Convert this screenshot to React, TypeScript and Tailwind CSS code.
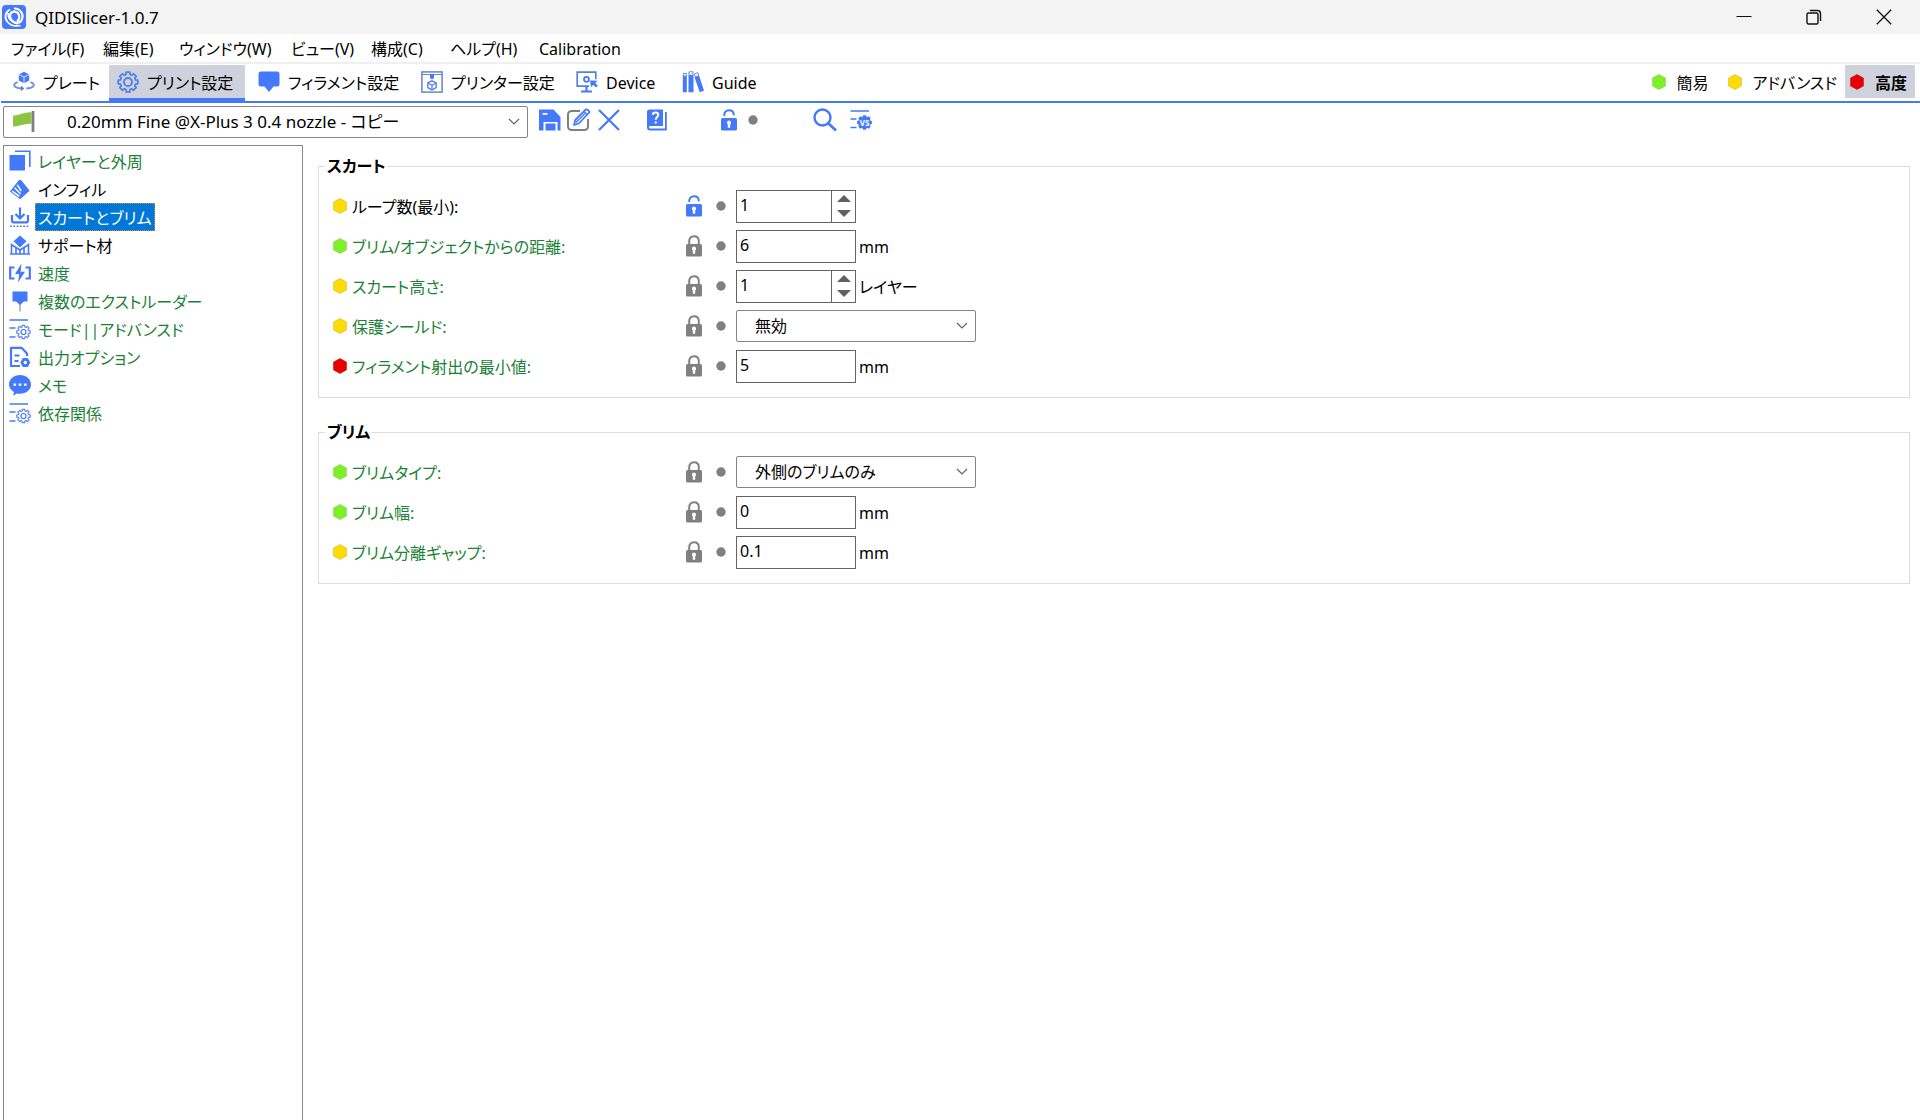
import React, { useState } from "react";

const BLUE = "#4479fb";
const GRAY = "#808080";

type Level = "simple" | "advanced" | "expert";
const levelColor: Record<Level, string> = {
  simple: "#7df028",
  advanced: "#ffdc00",
  expert: "#e70000",
};
const levelEdge: Record<Level, string> = {
  simple: "#8fd45c",
  advanced: "#e0c23c",
  expert: "#d22020",
};

function Svg({ children, w = 22, h = 22, vw = 22, vh = 22 }: { children: React.ReactNode; w?: number; h?: number; vw?: number; vh?: number }) {
  return (
    <svg width={w} height={h} viewBox={`0 0 ${vw} ${vh}`} fill="none" className="shrink-0" aria-hidden="true">
      {children}
    </svg>
  );
}

function Hex({ level }: { level: Level }) {
  return (
    <Svg w={14} h={16} vw={14} vh={16}>
      <path d="M7 .6 13.4 4v8L7 15.4.6 12V4z" fill={levelColor[level]} stroke={levelEdge[level]} strokeWidth=".8" />
    </Svg>
  );
}

function Dot() {
  return (
    <Svg w={10} h={10} vw={10} vh={10}>
      <circle cx="5" cy="5" r="4.7" fill={GRAY} />
    </Svg>
  );
}

function Lock({ open = false }: { open?: boolean }) {
  const c = open ? BLUE : GRAY;
  return (
    <Svg w={16} h={22} vw={16} vh={22}>
      <path d={open ? "M3.2 6.2C3.2 3 5.3 1.3 8 1.3s4.600 1.700 4.800 4.200" : "M3.200 10V6.200C3.200 3 5.300 1.300 8 1.300s4.800 1.700 4.800 4.900V10"} stroke={c} strokeWidth="2" strokeLinecap="round" />
      <rect x="0" y="9" width="16" height="12.500" rx="1.500" fill={c} />
      <path d="M8 11.600a2.100 2.100 0 0 1 1.200 3.800v3.300H6.800v-3.300A2.100 2.100 0 0 1 8 11.600z" fill="#fff" />
    </Svg>
  );
}

function gearPath(cx: number, cy: number, r: number, depth: number, teeth: number) {
  const pts: string[] = [];
  const step = (Math.PI * 2) / teeth;
  for (let i = 0; i < teeth; i++) {
    const a = i * step - Math.PI / 2;
    const spots: [number, number][] = [
      [r, -0.24],
      [r, 0.24],
      [r - depth, 0.34],
      [r - depth, 0.66],
    ];
    for (const [rad, f] of spots) {
      pts.push(`${(cx + rad * Math.cos(a + f * step)).toFixed(2)} ${(cy + rad * Math.sin(a + f * step)).toFixed(2)}`);
    }
  }
  return `M${pts.join("L")}z`;
}

function PlateIcon() {
  return (
    <Svg>
      <path d="M11 .8l5.200 2.600v6L11 12.200 5.800 9.400v-6z" fill={BLUE} />
      <path d="M6 3.600l5 2.500 5-2.500M11 6.100v6" stroke="#fff" strokeWidth=".8" />
      <path d="M4.500 11.200C-.2 13 .1 15.800 5.200 17l3.400.5M17.500 11.200c4.700 1.800 4.400 4.600-.7 5.800l-3.400.5" stroke="#6d8fd9" strokeWidth="1.800" />
      <path d="M8 14.600l3.400 2.900L8 20.200z" fill="#5c84e6" />
    </Svg>
  );
}

function GearIcon() {
  return (
    <Svg>
      <path d={gearPath(11, 11, 10, 2.3, 8)} stroke="#4d7de9" strokeWidth="1.700" strokeLinejoin="round" />
      <circle cx="11" cy="11" r="4" stroke="#4d7de9" strokeWidth="1.800" />
    </Svg>
  );
}

function FilamentIcon() {
  return (
    <Svg>
      <path d="M3 .5h16a2.500 2.500 0 0 1 2.500 2.500v10A2.500 2.500 0 0 1 19 15.500h-3.500L11 21l-4.500-5.500H3A2.500 2.500 0 0 1 .5 13V3A2.500 2.500 0 0 1 3 .5z" fill={BLUE} />
    </Svg>
  );
}

function PrinterIcon() {
  return (
    <Svg>
      <rect x=".9" y=".9" width="20.200" height="20.200" stroke="#6d8dcc" strokeWidth="1.600" />
      <path d="M1 3.500h20" stroke="#6d8dcc" strokeWidth="1.200" />
      <path d="M9 3h4v4l-2 1.500L9 7z" fill={BLUE} />
      <path d="M11 9.800l4.200 2.200v4.600L11 18.900l-4.200-2.300V12z" stroke="#4d7de9" strokeWidth="1.300" />
      <path d="M7 12.200l4 2.100 4-2.100M11 14.300v4.400" stroke="#4d7de9" strokeWidth="1.200" />
    </Svg>
  );
}

function DeviceIcon() {
  return (
    <Svg>
      <path d="M13 15.200H1.200V1.200h18.600v7" stroke="#5680dd" strokeWidth="1.700" />
      <path d="M5 20.500h11M10.500 15v5" stroke={BLUE} strokeWidth="2.200" />
      <circle cx="10.500" cy="8.300" r="2.500" stroke={BLUE} strokeWidth="1.800" />
      <path d="M14 9.500l7.500.3-2.300 2.200 2.600 2.800-1.800 1.800-2.700-2.800-2.300 2.500z" fill={BLUE} />
    </Svg>
  );
}

function GuideIcon() {
  return (
    <Svg>
      <path d="M.8 5h4v16.200h-4zM6.500 4h5v17.200h-5zM12.500 6.200l4.500-1.600 5 15-4.200 1.600z" fill={BLUE} />
      <path d="M1.300 2.500h3V5h-3zM7 .8h4v3.400H7zM12.300 3l3.600-1.400.9 3-3.500 1.300z" stroke="#6d8dcc" strokeWidth="1" />
    </Svg>
  );
}

function LayersIcon() {
  return (
    <Svg>
      <rect x=".5" y="5" width="15.500" height="15.500" fill={BLUE} />
      <path d="M6 1.300h14.800V17" stroke={BLUE} strokeWidth="1.600" />
    </Svg>
  );
}

function InfillIcon() {
  return (
    <Svg>
      <path d="M9.800 2.300a1.800 1.800 0 0 1 2.500 0l8.300 10.500-8.300 7.400a2 2 0 0 1-2.500 0L1 13.600z" fill={BLUE} />
      <path d="M8.200 6.800l4 6.200M5.600 9.800l6 6.200M3.300 13.200l7 5.200" stroke="#fff" strokeWidth="1.500" />
    </Svg>
  );
}

function SkirtIcon() {
  return (
    <Svg>
      <path d="M11 1.500V12M6.500 8l4.500 4.500L15.500 8" stroke={BLUE} strokeWidth="2.200" />
      <path d="M3 9v5.500a1.800 1.800 0 0 0 1.800 1.800h12.400a1.800 1.800 0 0 0 1.800-1.800V9" stroke={BLUE} strokeWidth="2.200" />
      <path d="M1 20.300h20" stroke={BLUE} strokeWidth="1.600" strokeDasharray="1.800 1.500" />
    </Svg>
  );
}

function SupportIcon() {
  return (
    <Svg>
      <path d="M11 1.500l6.500 5.800L11 13.500 4.500 7.300z" fill={BLUE} />
      <path d="M2.500 9.500v10M7 14v5.500M11 16v3.500M15 14v5.500M19.500 9.500v10M1 20h20" stroke={BLUE} strokeWidth="1.600" />
      <path d="M3 11l8 5 8-5" stroke={BLUE} strokeWidth="1.600" />
    </Svg>
  );
}

function SpeedIcon() {
  return (
    <Svg>
      <path d="M5.500 5.500H1.200v11h4.300M16.500 5.500h4.300v11h-4.300" stroke={BLUE} strokeWidth="2.200" />
      <path d="M12.500 1.500L6 12h4.200L9 20.500 16 9.800h-4.300z" fill={BLUE} />
    </Svg>
  );
}

function ExtruderIcon() {
  return (
    <Svg>
      <path d="M11 12v9.500" stroke="#bbb" strokeWidth="2" />
      <path d="M3.500 1.500h15v10H15L11 15l-4-3.500H3.500z" fill={BLUE} />
    </Svg>
  );
}

function AdvancedIcon() {
  return (
    <Svg>
      <path d="M.5 2h18.500M.5 10h6M.5 19h6" stroke={BLUE} strokeWidth="1.500" />
      <path d={gearPath(14.5, 14, 6.8, 1.6, 8)} stroke="#5b87f0" strokeWidth="1.200" strokeLinejoin="round" />
      <circle cx="14.500" cy="14" r="2.500" stroke={BLUE} strokeWidth="1.200" />
    </Svg>
  );
}

function OutputIcon() {
  return (
    <Svg>
      <path d="M11 20H2V1.800h10.500L18 7.500V10" stroke={BLUE} strokeWidth="2.200" strokeLinejoin="round" />
      <path d="M5.500 9.500h5M5.500 15h4" stroke={BLUE} strokeWidth="2" />
      <path d="M13.800 12h5l2.500 4.500-2.500 4.500h-5l-2.500-4.500z" fill={BLUE} />
      <circle cx="16.300" cy="16.500" r="1.700" fill="#fff" />
    </Svg>
  );
}

function NotesIcon() {
  return (
    <Svg>
      <path d="M11 1c6 0 11 4.100 11 9.500S17 19.800 11 19.800c-1.200 0-2-.1-3-.4L4.200 21.800 5 18C2 16.300 0 13.700 0 10.500 0 5.100 5 1 11 1z" fill={BLUE} />
      <path d="M4.500 9.500h2.600v2.300H4.500zM9.700 9.500h2.600v2.300H9.700zM14.900 9.500h2.600v2.300h-2.600z" fill="#fff" />
    </Svg>
  );
}

function Chevron() {
  return (
    <svg width="12" height="8" viewBox="0 0 12 8" fill="none" className="pointer-events-none absolute right-2 top-1/2 -translate-y-1/2" aria-hidden="true">
      <path d="M1 1l5 5 5-5" stroke="#606060" strokeWidth="1.200" />
    </svg>
  );
}

function AppLogo() {
  return (
    <Svg w={24} h={24} vw={24} vh={24}>
      <rect width="24" height="24" rx="4" fill={BLUE} />
      <path d="M12 3.500a8 8 0 0 1 7.500 11.800c-.9 1.800-2.600 2.700-4.500 2.700-4-.5-7-3.500-7-7a4.500 4.500 0 0 1 8.500-2c1.600 3 .5 6-1.500 7.500" stroke="#fff" strokeWidth="2.200" />
      <path d="M8 4.500C3 7 2 13 5.500 17c3 3.500 8 4.500 13 3.500" stroke="#fff" strokeWidth="1.700" />
      <path d="M6.200 8c-.8 5 3 9.500 9.800 11" stroke="#fff" strokeWidth="1.500" />
    </Svg>
  );
}

function TitleBar() {
  return (
    <header className="flex h-[34px] items-center bg-[#f3f3f3] pl-0.5 pr-px">
      <AppLogo />
      <h1 className="ml-[9px] flex-1 pt-0.5">QIDISlicer-1.0.7</h1>
      <button aria-label="最小化" className="flex h-full w-[70px] items-center justify-center">
        <Svg w={16} h={16} vw={16} vh={16}><path d="M.5 7.500h15" stroke="#111" strokeWidth="1" /></Svg>
      </button>
      <button aria-label="元に戻す" className="flex h-full w-[70px] items-center justify-center">
        <Svg w={16} h={16} vw={16} vh={16}>
          <rect x="1" y="4" width="11" height="11" rx="1.500" stroke="#111" strokeWidth="1.400" />
          <path d="M4 1.500h7.500a3 3 0 0 1 3 3V12" stroke="#111" strokeWidth="1.400" />
        </Svg>
      </button>
      <button aria-label="閉じる" className="flex h-full w-[70px] items-center justify-center">
        <Svg w={16} h={16} vw={16} vh={16}><path d="M.8.8l14.400 14.400M15.200.8L.8 15.200" stroke="#111" strokeWidth="1.300" /></Svg>
      </button>
    </header>
  );
}

const menus = [
  { label: "ファイル(F)", width: "w-[92px]" },
  { label: "編集(E)", width: "w-[76px]" },
  { label: "ウィンドウ(W)", width: "w-[112px]" },
  { label: "ビュー(V)", width: "w-20" },
  { label: "構成(C)", width: "w-[79px]" },
  { label: "ヘルプ(H)", width: "w-[89px]" },
  { label: "Calibration", width: "w-24" },
];

const tabs = [
  { label: "プレート", icon: <PlateIcon />, width: "w-[104px]" },
  { label: "プリント設定", icon: <GearIcon />, width: "w-[136px]" },
  { label: "フィラメント設定", icon: <FilamentIcon />, width: "w-[163px] ml-[5px]" },
  { label: "プリンター設定", icon: <PrinterIcon />, width: "w-[155px]" },
  { label: "Device", icon: <DeviceIcon />, width: "w-[106px]" },
  { label: "Guide", icon: <GuideIcon />, width: "w-[100px]" },
];

const modes: { label: string; level: Level }[] = [
  { label: "簡易", level: "simple" },
  { label: "アドバンスド", level: "advanced" },
  { label: "高度", level: "expert" },
];

function TabBar() {
  const [active, setActive] = useState(1);
  const [mode, setMode] = useState(2);
  return (
    <nav className="ml-px flex h-[39px] items-start border-b-2 border-[#4479fb] pl-1 pr-[5px] pt-px text-base">
      {tabs.map((t, i) => (
        <button
          key={t.label}
          onClick={() => setActive(i)}
          className={`flex h-9 shrink-0 items-center gap-2 whitespace-nowrap border-b-[3px] pl-2 ${t.width} ${i === active ? "border-[#4479fb] bg-[#cfd2dc]" : "border-transparent"}`}
        >
          {t.icon}
          <span className="pt-0.5">{t.label}</span>
        </button>
      ))}
      <div className="ml-auto flex">
        {modes.map((m, i) => (
          <button
            key={m.label}
            onClick={() => setMode(i)}
            className={`flex h-[33px] items-center gap-[11px] whitespace-nowrap pl-[5px] pr-2 ${i === 1 ? "ml-1.5" : ""} ${i === mode ? "bg-[#cfd2dc] font-bold" : ""}`}
          >
            <Hex level={m.level} />
            <span className="pt-0.5">{m.label}</span>
          </button>
        ))}
      </div>
    </nav>
  );
}

function Toolbar() {
  return (
    <div className="flex h-[42px] items-start pl-[3px] pt-[3px]">
      <div className="relative h-8 w-[525px]">
        <select aria-label="プリントプリセット" className="h-full w-full appearance-none rounded-xs border border-[#858585] bg-white pl-[63px]">
          <option>0.20mm Fine @X-Plus 3 0.4 nozzle - コピー</option>
        </select>
        <div className="pointer-events-none absolute left-2.5 top-[5px]">
          <Svg>
            <path d="M0 4.500C6 5 12 .5 18.500 1.500v11.500C12 12 6 16 0 15.500z" fill="#8cc63f" />
            <path d="M20 0v21" stroke="#808080" strokeWidth="2.800" />
          </Svg>
        </div>
        <Chevron />
      </div>
      <div className="flex h-7 items-center">
        <button aria-label="保存" className="ml-[11px]">
          <Svg><path d="M0 .5h14.500L21.500 8v13.500h-3V13H4.500v8.500H0zM3.500 4v1.800h5V4zM6.500 14.500h10v7h-10z" fill={BLUE} fillRule="evenodd" /></Svg>
        </button>
        <button aria-label="名前の変更" className="ml-1.5">
          <Svg w={24} h={24} vw={24} vh={24}>
            <path d="M13 3H4.500A3.500 3.500 0 0 0 1 6.500v12A3.500 3.500 0 0 0 4.500 22h13a3.500 3.500 0 0 0 3.500-3.500V11" stroke={GRAY} strokeWidth="2" />
            <path d="M7 17l1.300-5L18.800 1.500c1-.8 4.300 1.700 3.400 3L11.800 15.500z" stroke={BLUE} strokeWidth="1.800" strokeLinejoin="round" />
            <path d="M17 3.500l3.500 3.300M9 14.500L18 5.500" stroke={BLUE} strokeWidth="1.200" />
          </Svg>
        </button>
        <button aria-label="削除" className="ml-[7px]">
          <Svg><path d="M1 1l20 20M21 1L1 21" stroke={BLUE} strokeWidth="2.200" /></Svg>
        </button>
        <button aria-label="ヘルプ" className="ml-[27px]">
          <Svg w={20} vw={20}>
            <path d="M2.500.5H16V17H3.200a1.200 1.200 0 0 0 0 2.500H18V3h1.800v18.500H3a3 3 0 0 1-3-3V3A2.500 2.500 0 0 1 2.500.5z" fill={BLUE} />
            <path d="M5.800 6c0-3.200 5.400-3.200 5.400 0 0 2-2.500 2-2.500 4.800M8.700 12.500v2" stroke="#fff" strokeWidth="2" />
          </Svg>
        </button>
        <button aria-label="システム値に戻す" className="ml-[54px]"><Lock open /></button>
        <button aria-label="変更を元に戻す" className="ml-[11px]"><Dot /></button>
        <button aria-label="検索" className="ml-[55px]">
          <Svg w={24} h={24} vw={24} vh={24}>
            <circle cx="9.500" cy="9.500" r="8" stroke={BLUE} strokeWidth="2.400" />
            <path d="M15.500 15.500l7.500 7" stroke={BLUE} strokeWidth="2.800" />
          </Svg>
        </button>
        <button aria-label="プリセットの比較" className="ml-[13px]">
          <Svg>
            <path d="M.5 2h18.500M.5 10h6M.5 18.500h6" stroke={BLUE} strokeWidth="1.500" />
            <path d={gearPath(14.5, 13.5, 7.5, 1.2, 8)} fill={BLUE} />
            <text x="14.500" y="16.500" textAnchor="middle" fill="#fff" className="text-[8px] font-bold">VS</text>
          </Svg>
        </button>
      </div>
    </div>
  );
}

const pages = [
  { label: "レイヤーと外周", icon: <LayersIcon />, system: true },
  { label: "インフィル", icon: <InfillIcon />, system: false },
  { label: "スカートとブリム", icon: <SkirtIcon />, system: false },
  { label: "サポート材", icon: <SupportIcon />, system: false },
  { label: "速度", icon: <SpeedIcon />, system: true },
  { label: "複数のエクストルーダー", icon: <ExtruderIcon />, system: true },
  { label: "モード||アドバンスド", icon: <AdvancedIcon />, system: true },
  { label: "出力オプション", icon: <OutputIcon />, system: true },
  { label: "メモ", icon: <NotesIcon />, system: true },
  { label: "依存関係", icon: <AdvancedIcon />, system: true },
];

function Sidebar() {
  const [selected, setSelected] = useState(2);
  return (
    <aside className="w-[300px] shrink-0 border border-b-0 border-[#828790] pl-[5px] text-base">
      <ul className="pt-px">
        {pages.map((p, i) => (
          <li key={p.label}>
            <button onClick={() => setSelected(i)} className="flex h-7 items-center gap-1">
              {p.icon}
              <span
                className={`flex h-7 items-center whitespace-nowrap border px-0.5 pt-0.5 ${
                  i === selected
                    ? "border-dotted border-[#d98a3a] bg-[#0078d7] text-white"
                    : p.system
                      ? "border-transparent text-[#1b8136]"
                      : "border-transparent text-black"
                }`}
              >
                {p.label}
              </span>
            </button>
          </li>
        ))}
      </ul>
    </aside>
  );
}

interface Field {
  id: string;
  label: string;
  level: Level;
  kind: "spin" | "text" | "select";
  value: string;
  unit?: string;
  changed?: boolean;
}

const skirt: Field[] = [
  { id: "skirts", label: "ループ数(最小):", level: "advanced", kind: "spin", value: "1", changed: true },
  { id: "skirt_distance", label: "ブリム/オブジェクトからの距離:", level: "simple", kind: "text", value: "6", unit: "mm" },
  { id: "skirt_height", label: "スカート高さ:", level: "advanced", kind: "spin", value: "1", unit: "レイヤー" },
  { id: "draft_shield", label: "保護シールド:", level: "advanced", kind: "select", value: "無効" },
  { id: "min_skirt_length", label: "フィラメント射出の最小値:", level: "expert", kind: "text", value: "5", unit: "mm" },
];

const brim: Field[] = [
  { id: "brim_type", label: "ブリムタイプ:", level: "simple", kind: "select", value: "外側のブリムのみ" },
  { id: "brim_width", label: "ブリム幅:", level: "simple", kind: "text", value: "0", unit: "mm" },
  { id: "brim_separation", label: "ブリム分離ギャップ:", level: "advanced", kind: "text", value: "0.1", unit: "mm" },
];

function Control({ field }: { field: Field }) {
  const [value, setValue] = useState(field.value);
  if (field.kind === "select") {
    return (
      <div className="relative h-8 w-60">
        <select id={field.id} className="h-full w-full appearance-none rounded-xs border border-[#858585] bg-white pl-[18px] text-base">
          <option>{field.value}</option>
        </select>
        <Chevron />
      </div>
    );
  }
  const step = (d: number) => setValue(String(Math.max(0, Number(value) + d)));
  return (
    <div className="flex h-[33px] w-[120px] border border-[#646464] bg-white">
      <input id={field.id} value={value} onChange={(e) => setValue(e.target.value)} className="min-w-0 flex-1 pb-0.5 pl-[3px] outline-none" />
      {field.kind === "spin" && (
        <div className="flex w-6 flex-col items-center border-l border-[#646464]">
          <button aria-label="増やす" onClick={() => step(1)} className="flex flex-1 items-end pb-1">
            <Svg w={14} h={7} vw={14} vh={7}><path d="M7 0l7 7H0z" fill="#606060" /></Svg>
          </button>
          <button aria-label="減らす" onClick={() => step(-1)} className="flex flex-1 items-start pt-1">
            <Svg w={14} h={7} vw={14} vh={7}><path d="M7 7L0 0h14z" fill="#606060" /></Svg>
          </button>
        </div>
      )}
    </div>
  );
}

function Group({ title, fields }: { title: string; fields: Field[] }) {
  return (
    <fieldset className="min-w-0 border border-[#dcdcdc] pb-[11px] pl-3.5 pt-2 text-base">
      <legend className="-ml-2 h-6 px-0.5 font-bold leading-6">{title}</legend>
      {fields.map((f) => (
        <div key={f.id} className="flex h-10 items-center">
          <div className="flex w-[353px] items-center gap-[5px]">
            <Hex level={f.level} />
            <label htmlFor={f.id} className={`whitespace-nowrap pt-0.5 ${f.changed ? "text-black" : "text-[#1b8136]"}`}>
              {f.label}
            </label>
          </div>
          <button aria-label="システム値に戻す"><Lock open={f.changed} /></button>
          <button aria-label="変更を元に戻す" className="ml-3.5 mr-2.5"><Dot /></button>
          <Control field={f} />
          {f.unit && <span className="ml-[3px] whitespace-nowrap pt-0.5">{f.unit}</span>}
        </div>
      ))}
    </fieldset>
  );
}

export default function App() {
  return (
    <div className="flex min-h-screen flex-col bg-white font-['Noto_Sans','Noto_Sans_CJK_JP',sans-serif] text-[17px] leading-6 text-black [font-feature-settings:'palt']">
      <TitleBar />
      <div role="menubar" className="flex h-[30px] items-center border-b-2 border-[#f0f0f0] pl-[11px] pt-0.5 text-base">
        {menus.map((m) => (
          <button key={m.label} role="menuitem" className={`whitespace-nowrap text-left ${m.width}`}>
            {m.label}
          </button>
        ))}
      </div>
      <TabBar />
      <Toolbar />
      <div className="flex flex-1 pl-[3px]">
        <Sidebar />
        <main className="flex min-w-0 flex-1 flex-col gap-[22px] pl-[15px] pr-2.5 pt-[9px]">
          <Group title="スカート" fields={skirt} />
          <Group title="ブリム" fields={brim} />
        </main>
      </div>
    </div>
  );
}
